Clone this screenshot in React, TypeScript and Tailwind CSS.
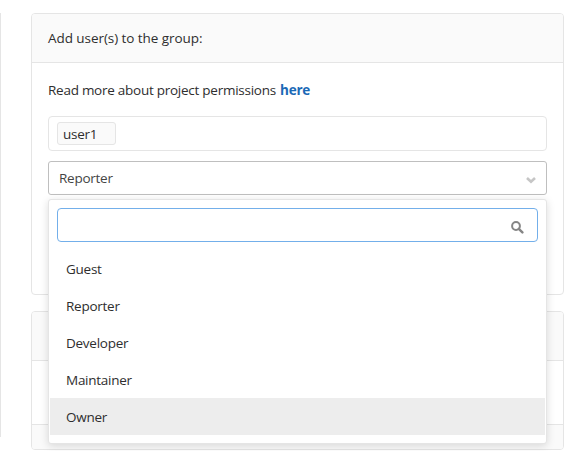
const roles = ['Guest', 'Reporter', 'Developer', 'Maintainer', 'Owner'];

function RoleMenu() {
  return (
    <div className="absolute top-[38px] left-0 h-[245px] w-[499px] rounded-[3px] border border-[#e5e5e5] bg-white px-px pt-2 shadow-[0_2px_8px_rgba(0,0,0,0.14)]">
      <div className="mx-[7px] flex h-[34px] items-center justify-end rounded-[4px] border border-[#73afea] pt-[4px] pr-[13px]">
        <svg width="13" height="13" viewBox="0 0 13 13" fill="none" stroke="#858585">
          <circle cx="5" cy="5" r="3.9" strokeWidth="2" />
          <path d="M7.8 7.8 L11.4 11.4" strokeWidth="2.4" strokeLinecap="round" />
        </svg>
      </div>
      <ul className="pt-2">
        {roles.map((role) => (
          <li
            key={role}
            className={`flex h-[37px] items-center pl-4 ${role === 'Owner' ? 'bg-[#ededed]' : ''}`}
          >
            {role}
          </li>
        ))}
      </ul>
    </div>
  );
}

export default function App() {
  return (
    <div className="flex h-[451px] w-[578px] overflow-hidden bg-white font-['Open_Sans',sans-serif] text-[13.5px] leading-5 tracking-[-0.26px] text-[#2e2e2e]">
      <div className="mt-[13px] h-[424px] w-[31px] shrink-0 rounded-r-[2px] border-l border-[#e5e5e5]" />
      <main className="w-[533px] shrink-0 pt-[13px]">
        <section className="h-[282px] rounded-[4px] border border-[#e5e5e5]">
          <header className="flex h-[49px] items-center rounded-t-[3px] border-b border-[#e5e5e5] bg-[#fafafa] px-4 tracking-[-0.06px]">
            Add user(s) to the group:
          </header>
          <div className="px-4 pt-[17px]">
            <p>
              Read more about project permissions{' '}
              <a className="ml-px font-bold text-[#1b69b6]">here</a>
            </p>
            <div className="mt-4 flex h-[35px] items-center rounded-[4px] border border-[#e5e5e5] pl-2">
              <span className="flex h-[23px] w-[59px] items-center rounded-[3px] border border-[#e5e5e5] bg-[#fafafa] pl-[5px]">
                user1
              </span>
            </div>
            <div className="relative mt-[10px]">
              <div className="flex h-[34px] items-center justify-between rounded-[3px] border border-[#bfbfbf] pr-[10px] pl-[10px] text-[#444]">
                Reporter
                <svg className="mt-[4px]" width="10" height="7" viewBox="0 0 10 7" fill="none" stroke="#c6c6c6" strokeWidth="2.6">
                  <path d="M1 1 L5 4.8 L9 1" />
                </svg>
              </div>
              <RoleMenu />
            </div>
          </div>
        </section>
        <section className="mt-4 flex h-[139px] flex-col rounded-[4px] border border-[#e5e5e5]">
          <div className="h-[49px] rounded-t-[3px] border-b border-[#e5e5e5] bg-[#fafafa]" />
          <div className="h-[63px]" />
          <div className="flex-1 rounded-b-[3px] border-t border-[#e5e5e5] bg-[#fafafa]" />
        </section>
      </main>
    </div>
  );
}
